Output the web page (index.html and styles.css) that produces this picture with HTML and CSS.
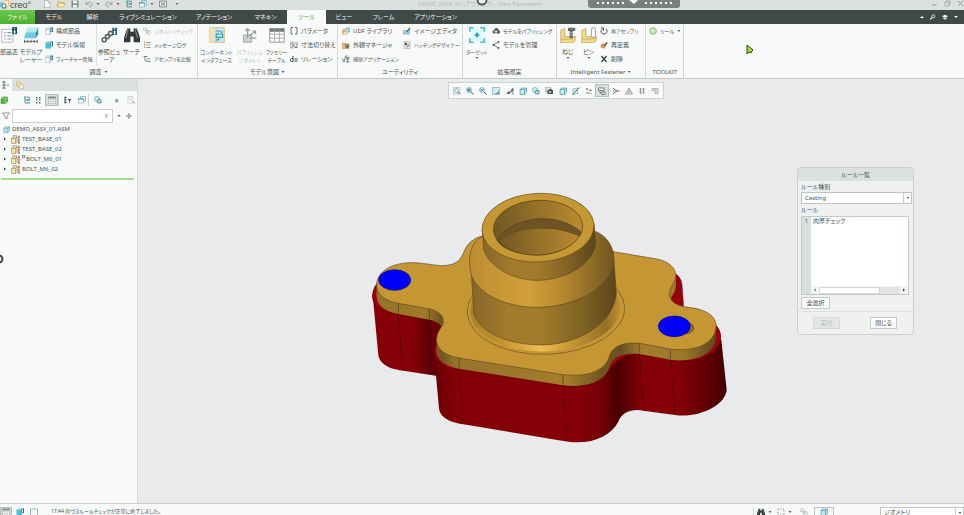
FILE: index.html
```html
<!DOCTYPE html>
<html lang="ja">
<head>
<meta charset="utf-8">
<title>DEMO_ASSY_01 - Creo Parametric</title>
<link rel="stylesheet" href="styles.css">
</head>
<body>
<svg class="defs" aria-hidden="true">
  <symbol id="page" viewBox="0 0 16 16"><path d="M3 1h7l4 4v10H3z" fill="#fff" stroke="#89918f"/><path d="M10 1v4h4" fill="none" stroke="#89918f"/></symbol>
  <symbol id="folder" viewBox="0 0 16 16"><path d="M1 14V3h5l2 2h6v3" fill="#f6dfa0" stroke="#b59039"/><path d="M1 14 4 7h12l-3 7z" fill="#fff0bd" stroke="#b59039"/></symbol>
  <symbol id="layers" viewBox="0 0 16 16"><path d="M1 2h6l2 2v5H1z" fill="#fbeab8" stroke="#c2a052"/><path d="M4 5h6l2 2v5H4z" fill="#fdf1cc" stroke="#c2a052"/><path d="M7 8h5l3 2v5H7z" fill="#fff6dc" stroke="#c2a052"/></symbol>
  <symbol id="save" viewBox="0 0 16 16"><path d="M1 1h14v14H1z" fill="#818987"/><path d="M4 1h8v6H4zM4 10h8v5H4z" fill="#edf1ef"/></symbol>
  <symbol id="undo" viewBox="0 0 16 16"><path d="M2 3v6h6M3 8c4-6 12-4 11 2-1 3-3 4-6 4" fill="none" stroke="#9ba19f" stroke-width="2"/></symbol>
  <symbol id="redo" viewBox="0 0 16 16"><path d="M14 3v6H8M13 8C9 2 1 4 2 10c1 3 3 4 6 4" fill="none" stroke="#9ba19f" stroke-width="2"/></symbol>
  <symbol id="down" viewBox="0 0 8 8"><path d="M1 2h6L4 6z" fill="#59615f"/></symbol>
  <symbol id="treeico" viewBox="0 0 16 16"><path d="M2 1h5v4H2zM8 6h6v4H8zM8 12h6v3H8z" fill="#54aebe"/><path d="M4 5v9h4M4 8h4" fill="none" stroke="#526b72" stroke-width="1.5"/><path d="m8 1 6 4" stroke="#437b8b" stroke-width="2"/></symbol>
  <symbol id="windows" viewBox="0 0 16 16"><path d="M5 1h10v9H5z" fill="#d9f1f6" stroke="#458c9e"/><path d="M1 5h10v9H1z" fill="#f8ffff" stroke="#458c9e"/><path d="M1 6h10" stroke="#318ea5" stroke-width="2"/></symbol>
  <symbol id="closewin" viewBox="0 0 16 16"><path d="M1 2h14v12H1zM4 5l8 6M12 5l-8 6" fill="none" stroke="#737977" stroke-width="1.5"/></symbol>
  <symbol id="bom" viewBox="0 0 20 20"><path d="M1 3h14v16H1z" fill="#fff" stroke="#a5abaa"/><path d="M4 7h2M8 7h5M4 11h2M8 11h5M4 15h2M8 15h5" stroke="#8b9ea3" stroke-width="1.5"/><rect x="14" width="6" height="9" fill="#164f64"/><path d="M17 4v4M17 1v1" stroke="#fff" stroke-width="2"/></symbol>
  <symbol id="player" viewBox="0 0 20 20"><path d="m5 3 2-2h12l-3 13H1z" fill="#70c7df"/><path d="m5 3 2-2h12l-3 6H3z" fill="#bcebf4"/><path d="m16 7 3-6v8l-3 5" fill="#3293ae"/><path d="M1 18h17M2 16v4M6 16v4M10 16v4M14 16v4M18 16v4" stroke="#4b5250"/></symbol>
  <symbol id="info" viewBox="0 0 16 16"><path d="M1 5h9v10H1z" fill="#fff" stroke="#9aa6a4"/><path d="m1 5 3-3h9v9l-3 4V5z" fill="#eaf7f9" stroke="#94a7ab"/><path d="M11 1h5v9h-5z" fill="#236b81"/><path d="M13.500 4v5M13.500 2v1" stroke="#fff" stroke-width="1.500"/></symbol>
  <symbol id="modelinfo" viewBox="0 0 16 16"><path d="M1 5h9v10H1z" fill="#45c2dd"/><path d="m1 5 3-3h9v9l-3 4V5z" fill="#9de2ee" stroke="#3797ac"/><path d="M11 1h5v9h-5z" fill="#236b81"/><path d="M13 3v6" stroke="#fff" stroke-width="2"/></symbol>
  <symbol id="ref" viewBox="0 0 20 20"><path d="m3 16 10-8" stroke="#7b8583" stroke-width="2"/><g fill="#fff" stroke="#596361" stroke-width="2"><circle cx="4" cy="16" r="2.500"/><circle cx="8" cy="12" r="2.500"/><circle cx="12" cy="8" r="2.500"/></g><path d="M14 1h6v9h-6z" fill="#24647a"/><path d="M17 5v4M17 2v1" stroke="#fff" stroke-width="2"/></symbol>
  <symbol id="bino" viewBox="0 0 20 20"><path d="M4 2h4v4h4V2h4l4 11v6h-8v-7H8v7H0v-6z" fill="#333b3a"/><path d="M5 3 2 14M14 3l3 11" stroke="#7c8683" stroke-width="1.500"/></symbol>
  <symbol id="geom" viewBox="0 0 16 16"><g fill="none" stroke="#b6bbb9" stroke-width="1.500"><path d="M1 2h6v5H1zM6 6h5v5H6z"/><circle cx="11" cy="11" r="4"/></g></symbol>
  <symbol id="msg" viewBox="0 0 16 16"><path d="M2 3h2M2 8h2M2 13h2" stroke="#d48748" stroke-width="3"/><path d="M6 3h9M6 8h9M6 13h9" stroke="#929b99" stroke-width="2"/></symbol>
  <symbol id="compare" viewBox="0 0 16 16"><path d="M1 3h8M4 3v9h5M8 8h7M9 13h6" fill="none" stroke="#5a6462" stroke-width="1.500"/></symbol>
  <symbol id="component" viewBox="0 0 20 20"><rect x="1" y="1" width="18" height="18" fill="#c9eaf1" stroke="#daa968" stroke-width="1"/><rect x="1" y="1" width="5" height="18" fill="#fae1a8"/><path d="M8 5h4v4H9v4h8V9h-3M12 6h5M12 13v3H8" fill="none" stroke="#4698aa" stroke-width="1.500"/><circle cx="13" cy="7" r="2" fill="#fff" stroke="#4698aa"/></symbol>
  <symbol id="publish" viewBox="0 0 20 20"><path d="M2 10h10v9H2z" fill="#ccd0ce" stroke="#949b99"/><path d="M7 14V2M4 5l3-3 3 3M9 11l8-6M13 5h4v4M10 14h8" fill="none" stroke="#969d9b" stroke-width="1.500"/></symbol>
  <symbol id="table" viewBox="0 0 20 20"><path d="M1 2h18v17H1z" fill="#fff" stroke="#7c8080"/><path d="M1 4h18" stroke="#777b7b" stroke-width="4"/><path d="M7 2v17M13 2v17M1 9h18M1 14h18" stroke="#9b9f9f"/></symbol>
  <symbol id="brackets" viewBox="0 0 16 16"><path d="M6 1H2v13h4M10 1h4v13h-4" fill="none" stroke="#505b5b" stroke-width="1.700"/></symbol>
  <symbol id="switch" viewBox="0 0 16 16"><path d="M1 2h9v12H1z" fill="#dadddc" stroke="#8c9390"/><path d="m3 4 5 5M14 2v11M10 13h5M3 12l5-3" stroke="#525b59" stroke-width="1.500"/></symbol>
  <symbol id="relation" viewBox="0 0 16 16"><path d="M6 2v11M6 7H3C0 8 0 13 3 13h3" fill="none" stroke="#3e4745" stroke-width="2"/><path d="M9 8h6M9 12h6" stroke="#3e4745" stroke-width="2"/></symbol>
  <symbol id="udf" viewBox="0 0 16 16"><path d="M1 6h10v8H1z" fill="#efb95d" stroke="#af7935"/><path d="m5 7 3-5h7v8h-4" fill="#a7d8e6" stroke="#4b8ca2"/><path d="M3 14h8v-4H3" fill="#fae2a2"/></symbol>
  <symbol id="appearance" viewBox="0 0 16 16"><path d="M1 4h5l2 2h6v9H1z" fill="#f2ba69" stroke="#a77a41"/><circle cx="10" cy="10" r="4" fill="#586865"/><circle cx="9" cy="9" r="1" fill="#fff"/></symbol>
  <symbol id="settings" viewBox="0 0 16 16"><circle cx="6" cy="6" r="5" fill="#d8f0f4" stroke="#5ba3b3" stroke-width="1.500"/><path d="M7 7h7v7H7z" fill="#a8d8e2" stroke="#4a8e9e" stroke-width="1.500"/></symbol>
  <symbol id="aux" viewBox="0 0 16 16"><path d="m1 7 3 7 3-12h4" fill="none" stroke="#505b59" stroke-width="1.500"/><path d="M8 5h7M11 5v9M8 14h7M8 8h7" stroke="#74807d" stroke-width="2"/></symbol>
  <symbol id="edit" viewBox="0 0 16 16"><path d="M1 7h12v7H1z" fill="#a5dceb" stroke="#5c8992"/><path d="m6 10 7-9 2 2-7 8z" fill="#405f67"/></symbol>
  <symbol id="hatch" viewBox="0 0 16 16"><path d="M2 1h12v14H2z" fill="#eee" stroke="#8c9491"/><path d="M4 4h3v3H4zM6 11l6-6M8 13l5-5" stroke="#4b5351" stroke-width="1.500"/></symbol>
  <symbol id="target" viewBox="0 0 20 20"><path d="M3 3h14v14H3z" fill="#dbfbfb"/><path d="M1 6V1h5M14 1h5v5M19 14v5h-5M6 19H1v-5" fill="none" stroke="#36cbd1" stroke-width="2"/><path d="M10 7v6M7 10h6" stroke="#159ba7" stroke-width="2"/></symbol>
  <symbol id="cloud" viewBox="0 0 16 16"><path d="M3 13c-4-3-1-7 2-7 0-6 8-5 8 0 4 1 4 6 1 7z" fill="#4e5654"/><path d="M8 15V8M5 10l3-3 3 3" fill="none" stroke="#f8faf9" stroke-width="2"/></symbol>
  <symbol id="share" viewBox="0 0 16 16"><path d="M13 2 3 8l10 6" fill="none" stroke="#505856" stroke-width="1.500"/><g fill="#505856"><circle cx="13" cy="2" r="2"/><circle cx="3" cy="8" r="2"/><circle cx="13" cy="14" r="2"/></g></symbol>
  <symbol id="screw" viewBox="0 0 20 20"><path d="m1 4 5-2v10h13v5l-3 3H1z" fill="#f2d985" stroke="#c7a45d"/><path d="M1 15h15l3-3" fill="none" stroke="#c9a968"/><path d="M10 1h9v4h-3v9h-4V5h-2z" fill="#666e70"/><path d="M12 7h4M12 10h4" stroke="#bfc4c4"/></symbol>
  <symbol id="pin" viewBox="0 0 20 20"><path d="m1 4 5-2v10h13v5l-3 3H1z" fill="#f2d985" stroke="#c7a45d"/><path d="M1 15h15l3-3" fill="none" stroke="#c9a968"/><rect x="13" y="1" width="5" height="12" rx="2" fill="#fff" stroke="#82898a"/></symbol>
  <symbol id="reload" viewBox="0 0 16 16"><path d="M5 4C0 7 2 14 8 14c6 0 8-6 4-10M2 2h5v5" fill="none" stroke="#444c4a" stroke-width="2"/></symbol>
  <symbol id="redefine" viewBox="0 0 16 16"><circle cx="6" cy="10" r="5" fill="#d19d54"/><path d="m7 9 7-8 1 4-5 6z" fill="#715d45"/></symbol>
  <symbol id="cross" viewBox="0 0 16 16"><path d="m3 2 10 12M13 2 3 14" stroke="#353e3c" stroke-width="2.500"/></symbol>
  <symbol id="globe" viewBox="0 0 16 16"><circle cx="8" cy="8" r="7" fill="#b7dca0" stroke="#7cb067"/><path d="M4 8h8M8 4v8" stroke="#e8f5e0" stroke-width="2"/></symbol>
  <symbol id="cube" viewBox="0 0 16 16"><path d="m2 5 4-3h9v9l-4 4H2z" fill="#bee9f1" stroke="#36798b"/><path d="M2 5h9v10M11 5l4-3" fill="none" stroke="#36798b"/></symbol>
  <symbol id="greencube" viewBox="0 0 16 16"><path d="m2 5 4-3h9v9l-4 4H2z" fill="#4fbb35" stroke="#367f26"/><path d="M2 5h9v10M11 5l4-3" fill="none" stroke="#b4e8a6"/></symbol>
  <symbol id="part" viewBox="0 0 18 18"><path d="m1 7 3-3h8v9l-3 4H1z" fill="#f6e5ab" stroke="#817957"/><path d="M1 7h8v10M9 7l3-3M4 4V1h7v3" fill="none" stroke="#817957"/><path d="M14 2h3v4h-3zM14 8h3v3h-3zM14 13h3v4h-3z" fill="#d49b92" stroke="#8f6a67"/></symbol>
  <symbol id="zoomfit" viewBox="0 0 16 16"><path d="M1 1h13v13H1z" fill="none" stroke="#88908e"/><circle cx="7" cy="7" r="4" fill="#e1f4f7" stroke="#368293"/><path d="m10 10 4 4" stroke="#46717a" stroke-width="2"/></symbol>
  <symbol id="pagefind" viewBox="0 0 16 16"><path d="M2 1h10v13H2zM4 5h6M4 8h6" fill="#fff" stroke="#a4aaa8"/><path d="m11 11 4 4" stroke="#7d8583" stroke-width="2"/></symbol>
  <symbol id="zoomin" viewBox="0 0 16 16"><circle cx="6" cy="6" r="5" fill="#bee7ee" stroke="#37899d"/><path d="M3 6h6M6 3v6M10 10l5 5" stroke="#376777" stroke-width="2"/></symbol>
  <symbol id="zoomout" viewBox="0 0 16 16"><circle cx="6" cy="6" r="5" fill="#d7f1f5" stroke="#37899d"/><path d="M3 6h6M10 10l5 5" stroke="#376777" stroke-width="2"/></symbol>
  <symbol id="repaint" viewBox="0 0 16 16"><path d="M1 1h14v14H1z" fill="#d5eef2" stroke="#60919c"/><path d="M14 3c0 8-5 10-12 11h12z" fill="#44a4ba"/></symbol>
  <symbol id="browser" viewBox="0 0 16 16"><path d="M1 2h14v13H1z" fill="#f4fbfc" stroke="#74a5b1" stroke-width="1.500"/></symbol>
  <symbol id="brush" viewBox="0 0 16 16"><path d="M15 1v8l-5 1-3 4H1l3-5h5l2-5z" fill="#606866"/><path d="M12 11h4v4h-4z" fill="#a5aba9"/></symbol>
  <symbol id="camera" viewBox="0 0 16 16"><path d="M1 1h11v9H1z" fill="#ddd" stroke="#858b88"/><path d="M5 6h3l1-2h4l1 2h2v8H5z" fill="#4b5450"/><circle cx="10" cy="10" r="2" fill="#dce4e1"/></symbol>
  <symbol id="plane" viewBox="0 0 16 16"><path d="m2 4 9-2v11l-9 2z" fill="#dcf1f5" stroke="#528794"/><path d="m1 15 14-14" stroke="#477985" stroke-width="2"/></symbol>
  <symbol id="datum" viewBox="0 0 16 16"><path d="m2 2 4 4M6 2 2 6M8 7h6M10 4v5M5 11l8 3M2 10l4 4" stroke="#8a7556" stroke-width="1.500"/></symbol>
  <symbol id="annot" viewBox="0 0 16 16"><path d="M1 2h11v5H1zM8 10h6v5H8zM4 7v5h4" fill="#fff" stroke="#525c59" stroke-width="1.500"/></symbol>
  <symbol id="spin" viewBox="0 0 16 16"><path d="m2 2 7 6-7 6" fill="none" stroke="#59605e" stroke-width="2"/><path d="M8 8h7" stroke="#b63e44" stroke-width="2"/><circle cx="3" cy="8" r="1.500" fill="#4aa4b4"/></symbol>
  <symbol id="triangle" viewBox="0 0 16 16"><path d="m8 2 7 12H1z" fill="#e6e9e8" stroke="#9ba19e" stroke-width="2"/><path d="M8 6v6" stroke="#999" stroke-width="2"/></symbol>
  <symbol id="pause" viewBox="0 0 16 16"><path d="M5 2v12M11 2v12" stroke="#939996" stroke-width="3"/></symbol>
  <symbol id="play" viewBox="0 0 16 16"><path d="M2 3h12v10H8V7H2z" fill="#d4d8d6" stroke="#b2b7b5" stroke-width="2"/></symbol>
  <symbol id="list" viewBox="0 0 16 16"><path d="M2 2h3v3H2zM8 2h3v3H8zM2 7h3v2H2zM8 7h3v2H8zM2 12h3v3H2zM8 12h3v3H8z" fill="#4e6263"/></symbol>
  <symbol id="filtertree" viewBox="0 0 16 16"><path d="M2 1v14M2 3h3M2 8h3M2 13h3" stroke="#32464b" stroke-width="2"/><path d="M7 6h8l-3 4v4l-2-1v-3z" fill="#526466"/></symbol>
  <symbol id="modeltree" viewBox="0 0 16 16"><path d="M2 1h4v3H2zM2 7h4v3H2zM2 13h4v3H2zM9 8h5" fill="none" stroke="#5b6765" stroke-width="1.500"/></symbol>
  <symbol id="filter" viewBox="0 0 16 16"><path d="M1 2h14l-5 6v6l-4-3V8z" fill="#fff" stroke="#707a77" stroke-width="1.500"/></symbol>
  <symbol id="plus" viewBox="0 0 16 16"><path d="M8 2v12M2 8h12" stroke="#9ca29f" stroke-width="3"/></symbol>
  <symbol id="right" viewBox="0 0 8 8"><path d="m2 1 4 3-4 3z" fill="#353e3c"/></symbol>
  <symbol id="left" viewBox="0 0 8 8"><path d="M6 1 2 4l4 3z" fill="#7c8280"/></symbol>
  <symbol id="up" viewBox="0 0 8 8"><path d="M0 6 4 2l4 4z" fill="#fff"/></symbol>
  <symbol id="search" viewBox="0 0 16 16"><circle cx="9" cy="6" r="4" fill="none" stroke="#fff" stroke-width="2"/><path d="m6 9-5 5" stroke="#fff" stroke-width="3"/></symbol>
  <symbol id="hat" viewBox="0 0 16 16"><path d="m0 6 8-4 8 4-8 4zM3 9l5 3 5-3v3l-5 3-5-3z" fill="#fff"/></symbol>
</svg>

<header class="titlebar">
  <svg class="logo" viewBox="0 0 16 16"><path d="M0 4h6v9H0z" fill="#80c7db"/><path d="M5 5 9 1h6v8l-4 5H5z" fill="#fff2ce" stroke="#d79b3d"/><path d="M4 7h6v7H4z" fill="#fff" stroke="#4694aa" stroke-width="2"/></svg>
  <span class="brand">creo°</span>
  <nav class="quick" aria-label="クイックアクセス">
    <button aria-label="新規"><svg><use href="#page"/></svg></button><button aria-label="開く"><svg><use href="#folder"/></svg></button><button aria-label="保存"><svg><use href="#save"/></svg></button><button class="wide" aria-label="元に戻す"><svg><use href="#undo"/></svg><svg class="tiny"><use href="#down"/></svg></button><button class="wide" aria-label="やり直し"><svg><use href="#redo"/></svg><svg class="tiny"><use href="#down"/></svg></button><button aria-label="再生成"><svg><use href="#treeico"/></svg></button><button class="wide" aria-label="ウィンドウ"><svg><use href="#windows"/></svg><svg class="tiny"><use href="#down"/></svg></button><button aria-label="閉じる"><svg><use href="#closewin"/></svg></button><button aria-label="カスタマイズ"><svg class="tiny"><use href="#down"/></svg></button>
  </nav>
  <span class="doc">DEMO_ASSY_01 (アクティブ) - Creo Parametric</span>
  <div class="winctl"><button aria-label="最小化"><svg viewBox="0 0 16 16"><path d="M3 11h10" stroke="#a4aaa8" stroke-width="3"/></svg></button><button aria-label="元のサイズ"><svg viewBox="0 0 16 16"><path d="M5 5V2h9v9h-3M2 5h9v9H2z" fill="none" stroke="#a4aaa8" stroke-width="2"/></svg></button><button aria-label="終了"><svg viewBox="0 0 16 16"><path d="m2 2 12 12M14 2 2 14" stroke="#8c9290" stroke-width="2"/></svg></button></div>
  <svg class="ring" viewBox="0 0 12 6"><circle cx="6" cy="0" r="4.500" fill="#eef0ef" stroke="#525957" stroke-width="2"/></svg>
  <svg class="grip" viewBox="0 0 92 9"><path d="M0 0h92v5q0 3-3 3H3Q0 8 0 5z" fill="#7b807f"/><path d="M9 3h28M57 3h28" stroke="#fff" stroke-width="2" stroke-dasharray="2 3"/><path d="M41 0h9l-4 4z" fill="#fff"/></svg>
</header>

<nav class="tabs" aria-label="リボン">
  <a class="file" href="#">ファイル</a><a href="#">モデル</a><a href="#">解析</a><a href="#">ライブシミュレーション</a><a href="#">アノテーション</a><a href="#">マネキン</a><a class="active" href="#">ツール</a><a href="#">ビュー</a><a href="#">フレーム</a><a href="#">アプリケーション</a>
  <div class="help"><svg class="tiny"><use href="#up"/></svg><svg><use href="#search"/></svg><svg><use href="#hat"/></svg><svg class="tiny" viewBox="0 0 8 8"><path d="M0 2h8L4 6z" fill="#fff"/></svg></div>
</nav>

<section class="ribbon">
  <div class="group survey">
    <div class="tools">
      <button class="big"><svg><use href="#bom"/></svg><span>部品表</span></button>
      <button class="big"><svg><use href="#player"/></svg><span>モデルプ<br>レーヤー</span></button>
      <div class="stack"><button><svg><use href="#info"/></svg>構成部品</button><button><svg><use href="#modelinfo"/></svg>モデル情報</button><button class="kana"><svg><use href="#info"/></svg>フィーチャー情報</button></div>
      <button class="big divided"><svg><use href="#ref"/></svg><span>参照ビュ<br>ーア</span></button>
      <button class="big"><svg><use href="#bino"/></svg><span>サーチ</span></button>
      <div class="stack"><button class="kana" disabled><svg><use href="#geom"/></svg>ジオメトリチェック</button><button class="kana"><svg><use href="#msg"/></svg>メッセージログ</button><button class="kana"><svg><use href="#compare"/></svg>アセンブリを比較</button></div>
    </div><div class="caption">調査<svg class="tiny"><use href="#down"/></svg></div>
  </div>
  <div class="group intent">
    <div class="tools">
      <button class="big kana"><svg><use href="#component"/></svg><span>コンポーネント<br>インタフェース</span></button>
      <button class="big kana" disabled><svg><use href="#publish"/></svg><span>パブリッシュ<br>ジオメトリ</span></button>
      <button class="big kana"><svg><use href="#table"/></svg><span>ファミリー<br>テーブル</span></button>
      <div class="stack"><button><svg><use href="#brackets"/></svg>パラメータ</button><button><svg><use href="#switch"/></svg>寸法切り替え</button><button><svg><use href="#relation"/></svg>リレーション</button></div>
    </div><div class="caption">モデル意図<svg class="tiny"><use href="#down"/></svg></div>
  </div>
  <div class="group utility">
    <div class="tools">
      <div class="stack"><button><svg><use href="#udf"/></svg>UDF ライブラリ</button><button><svg><use href="#appearance"/></svg>外観マネージャ</button><button class="kana"><svg><use href="#aux"/></svg>補助アプリケーション</button></div>
      <div class="stack"><button><svg><use href="#edit"/></svg>イメージエディタ</button><button class="kana"><svg><use href="#hatch"/></svg>ハッチングデザイナー</button></div>
    </div><div class="caption">ユーティリティ</div>
  </div>
  <div class="group reality">
    <div class="tools">
      <button class="big kana"><svg><use href="#target"/></svg><span>ターゲット</span><svg class="tiny"><use href="#down"/></svg></button>
      <div class="stack"><button class="kana"><svg><use href="#cloud"/></svg>モデルをパブリッシング</button><button><svg><use href="#share"/></svg>モデルを管理</button></div>
    </div><div class="caption">拡張現実</div>
  </div>
  <div class="group fastener">
    <div class="tools">
      <button class="big"><svg><use href="#screw"/></svg><span>ねじ</span><svg class="tiny"><use href="#down"/></svg></button>
      <button class="big"><svg><use href="#pin"/></svg><span>ピン</span><svg class="tiny"><use href="#down"/></svg></button>
      <div class="stack"><button class="kana"><svg><use href="#reload"/></svg>再アセンブリ</button><button><svg><use href="#redefine"/></svg>再定義</button><button><svg><use href="#cross"/></svg>削除</button></div>
    </div><div class="caption">Intelligent Fastener<svg class="tiny"><use href="#down"/></svg></div>
  </div>
  <div class="group toolkit">
    <div class="tools"><div class="stack"><button class="kana"><svg><use href="#globe"/></svg>ツール<svg class="tiny"><use href="#down"/></svg></button></div></div>
    <div class="caption">TOOLKIT</div>
  </div>
</section>

<div class="workspace">
  <aside class="sidebar">
    <div class="sidetabs"><button class="on" aria-label="モデルツリー"><svg><use href="#modeltree"/></svg></button><button aria-label="フォルダ"><svg><use href="#layers"/></svg></button></div>
    <div class="treebar">
      <button aria-label="モデル"><svg><use href="#greencube"/></svg></button>
      <button aria-label="ツリー"><svg><use href="#treeico"/></svg></button><button aria-label="リスト"><svg><use href="#list"/></svg></button><button class="pressed" aria-label="列"><svg><use href="#table"/></svg></button><button class="divided" aria-label="フィルタ"><svg><use href="#filtertree"/></svg></button><button aria-label="表示"><svg><use href="#windows"/></svg></button><button class="divided" aria-label="設定"><svg><use href="#settings"/></svg></button><button aria-label="その他">»</button><button aria-label="検索"><svg><use href="#pagefind"/></svg></button>
    </div>
    <div class="find"><svg><use href="#filter"/></svg><label><input type="text" aria-label="ツリー検索"><span>×</span></label><svg class="tiny"><use href="#down"/></svg><svg><use href="#plus"/></svg></div>
    <ul class="tree">
      <li class="root"><svg><use href="#cube"/></svg>DEMO_ASSY_01.ASM</li>
      <li><svg class="tiny"><use href="#right"/></svg><svg><use href="#part"/></svg>TEST_BASE_01</li>
      <li><svg class="tiny"><use href="#right"/></svg><svg><use href="#part"/></svg>TEST_BASE_02</li>
      <li><svg class="tiny"><use href="#right"/></svg><svg><use href="#part"/></svg><span><i class="mark"></i>BOLT_M6_01</span></li>
      <li><svg class="tiny"><use href="#right"/></svg><svg><use href="#part"/></svg>BOLT_M6_02</li>
    </ul>
    <div class="insert"></div>
  </aside>

  <main class="canvas">
    <div class="viewbar">
      <button aria-label="全体表示"><svg><use href="#zoomfit"/></svg></button><button aria-label="拡大"><svg><use href="#zoomin"/></svg></button><button aria-label="縮小"><svg><use href="#zoomout"/></svg></button><button aria-label="再表示"><svg><use href="#repaint"/></svg></button><button aria-label="レンダリング"><svg><use href="#brush"/></svg></button><button aria-label="表示スタイル"><svg><use href="#cube"/></svg></button><button aria-label="保存ビュー"><svg><use href="#settings"/></svg></button><button aria-label="ビューマネージャ"><svg><use href="#camera"/></svg></button><button aria-label="透視"><svg><use href="#cube"/></svg></button><button aria-label="断面"><svg><use href="#plane"/></svg></button><button aria-label="データム"><svg><use href="#datum"/></svg></button><button class="pressed" aria-label="注記"><svg><use href="#annot"/></svg></button><button aria-label="スピンセンター"><svg><use href="#spin"/></svg></button><button aria-label="解析"><svg><use href="#triangle"/></svg></button><button aria-label="一時停止"><svg><use href="#pause"/></svg></button><button aria-label="再生"><svg><use href="#play"/></svg></button>
    </div>

    <svg class="model" viewBox="0 0 1140 810" role="img" aria-label="アセンブリモデル">
      <defs>
        <linearGradient id="red" gradientUnits="userSpaceOnUse" x1="40" y1="0" x2="1100" y2="0"><stop offset="0" stop-color="#850007"/><stop offset=".11" stop-color="#850007"/><stop offset=".16" stop-color="#5d0005"/><stop offset=".19" stop-color="#710006"/><stop offset=".23" stop-color="#840007"/><stop offset=".58" stop-color="#840006"/><stop offset=".64" stop-color="#760005"/><stop offset=".69" stop-color="#4b0003"/><stop offset=".72" stop-color="#600004"/><stop offset=".76" stop-color="#830006"/><stop offset=".86" stop-color="#840006"/><stop offset=".94" stop-color="#640004"/><stop offset="1" stop-color="#400002"/></linearGradient>
        <linearGradient id="side" gradientUnits="userSpaceOnUse" x1="50" y1="0" x2="1070" y2="0"><stop offset="0" stop-color="#92712a"/><stop offset=".14" stop-color="#a17b2b"/><stop offset=".19" stop-color="#6f5520"/><stop offset=".23" stop-color="#94732b"/><stop offset=".56" stop-color="#a47d2c"/><stop offset=".66" stop-color="#705620"/><stop offset=".72" stop-color="#695020"/><stop offset=".78" stop-color="#a47d2d"/><stop offset=".9" stop-color="#9c782c"/><stop offset="1" stop-color="#5c461a"/></linearGradient>
        <linearGradient id="wall" x1="0" x2="1"><stop offset="0" stop-color="#85672a"/><stop offset=".25" stop-color="#a27b2d"/><stop offset=".5" stop-color="#a17a2c"/><stop offset=".78" stop-color="#7d6023"/><stop offset="1" stop-color="#5b451a"/></linearGradient>
        <linearGradient id="cone" x1="0" x2="1"><stop offset="0" stop-color="#bb8c32"/><stop offset=".4" stop-color="#d2a03a"/><stop offset=".65" stop-color="#b58830"/><stop offset="1" stop-color="#715520"/></linearGradient>
        <linearGradient id="bore" x1="0" x2="1"><stop offset="0" stop-color="#705724"/><stop offset=".5" stop-color="#957129"/><stop offset="1" stop-color="#b98a31"/></linearGradient>
        <linearGradient id="fillet" x1="0" x2="1"><stop offset="0" stop-color="#a87f2d"/><stop offset=".22" stop-color="#c8952f"/><stop offset=".46" stop-color="#f0bf56"/><stop offset=".66" stop-color="#c59635"/><stop offset=".9" stop-color="#957027"/><stop offset="1" stop-color="#bd8e31"/></linearGradient>
        <path id="plate" d="M50 315C50 275 95 247 160 248C200 250 225 257 250 257C290 255 302 240 312 215C322 190 340 175 367 168L700 150L760 215L890 237C925 243 950 265 947 290C945 310 930 320 928 340C928 365 950 378 985 382C1040 388 1070 410 1068 440C1065 490 1010 515 935 508L838 490C790 485 755 500 748 530C735 570 690 592 609 584L297 534C250 525 228 505 230 475C232 450 250 440 250 425C250 405 235 393 208 387L115 370C75 362 50 345 50 315Z"/>
      </defs>
      <path d="M38 345 55 525C60 558 100 569 130 572L228 587 237 685C240 715 275 728 305 732L610 783C690 798 750 770 775 725C785 695 820 685 850 692L945 705C1010 715 1095 680 1100 630L1084 480 1020 420 960 400 600 350 220 350z" fill="url(#red)"/>
      <path d="M948 282Q967 294 967 325L971 380H940L925 340z" fill="#980009" stroke="#580005"/>
      <path d="M38 350C38 295 100 270 160 290L900 380 1060 430C1095 455 1085 505 1045 525C1010 545 970 546 920 538L835 523C790 520 765 545 748 570C715 610 665 625 610 618L297 570C250 565 220 540 222 508L250 450C245 430 220 422 200 418L115 404C72 395 38 380 38 350z" fill="#9f000b" stroke="#690006" stroke-width="3"/>
      <g fill="url(#side)"><use href="#plate" y="32"/><use href="#plate" y="24"/><use href="#plate" y="16"/><use href="#plate" y="8"/></g>
      <use href="#plate" fill="#c59734" stroke="#61491b" stroke-width="2"/>
      <path d="M115 370v32M208 387v32M297 534v32M609 584v32M838 490v32M931 508v32" stroke="#513e19" stroke-width="2"/>
      <path d="m115 405 12 165M208 421l15 165M297 570l10 162M609 618l13 165M755 565l18 160M838 524l14 168M931 541l15 164" stroke="#4d0004" stroke-width="2"/>
      <ellipse cx="558" cy="390" rx="236" ry="133" transform="rotate(-2 558 390)" fill="#c59734" stroke="#6b511d" stroke-width="2"/>
      <ellipse cx="556" cy="388" rx="225" ry="126" transform="rotate(-2 556 388)" fill="url(#fillet)"/>
      <path d="M334 275 341 397C355 455 440 495 550 495C670 490 765 420 769 338L761 235z" fill="url(#wall)" stroke="#604a1c" stroke-width="2"/>
      <path d="M367 170C330 188 322 235 334 285C355 345 440 382 530 382C640 382 745 330 762 250C765 200 740 165 700 152z" fill="url(#cone)" stroke="#604a1c" stroke-width="2"/>
      <path d="M367 148 371 207C385 260 460 301 530 301C620 301 703 250 707 188L702 130z" fill="url(#wall)" stroke="#604a1c" stroke-width="2"/>
      <ellipse cx="534" cy="143" rx="168" ry="103" transform="rotate(-3 534 143)" fill="#c69834" stroke="#604a1c" stroke-width="2"/>
      <ellipse cx="534" cy="143" rx="134" ry="82" transform="rotate(-3 534 143)" fill="url(#bore)"/>
      <path d="M411 181C440 120 580 83 664 157L655 169C585 132 480 138 421 192z" fill="#6e5424" stroke="#4e3e1b" stroke-width="2"/>
      <path d="M416 189C465 137 580 134 657 169C640 203 590 226 537 227C478 225 435 212 416 189z" fill="url(#bore)"/>
      <ellipse cx="534" cy="143" rx="134" ry="82" transform="rotate(-3 534 143)" fill="none" stroke="#4e3d18" stroke-width="2"/>
      <ellipse cx="978" cy="444" rx="23" ry="17" fill="#8b6c2b" stroke="#4c3b19" stroke-width="2"/>
      <g fill="#0000fa" stroke="#000085" stroke-width="2"><ellipse cx="104" cy="300" rx="48" ry="31"/><ellipse cx="943" cy="439" rx="48" ry="31"/></g>
    </svg>

    <form class="dialog" aria-labelledby="dlg-title">
      <h2 id="dlg-title">ルール一覧</h2>
      <div class="dlgbody">
        <label for="kind">ルール種別</label>
        <div class="combo"><select id="kind"><option>Casting</option></select><i><svg class="tiny"><use href="#down"/></svg></i></div>
        <div class="label">ルール</div>
        <div class="listbox"><table aria-label="ルール"><tbody><tr><th scope="row">1</th><td>肉厚チェック</td></tr></tbody></table><div class="scroll"><svg class="tiny"><use href="#left"/></svg><div class="track"><div class="thumb"></div></div><svg class="tiny"><use href="#right"/></svg></div></div>
        <button class="all" type="button">全選択</button>
      </div>
      <div class="actions"><button type="button" disabled>実行</button><button type="button">閉じる</button></div>
    </form>
  </main>
</div>

<footer class="status">
  <div class="statusleft"><button class="pressed" aria-label="ナビゲータ"><svg><use href="#table"/></svg></button><button aria-label="ブラウザ"><svg><use href="#modelinfo"/></svg></button><button aria-label="全画面"><svg><use href="#browser"/></svg></button></div>
  <output>17:44 肉づきルールチェックが正常に終了しました。</output>
  <div class="statusright"><button aria-label="検索"><svg><use href="#bino"/></svg><svg class="tiny"><use href="#down"/></svg></button><button aria-label="選択"><svg viewBox="0 0 16 16"><path d="M2 2h12v12H2z" fill="none" stroke="#7b8280" stroke-width="2" stroke-dasharray="2 3"/></svg><svg class="tiny"><use href="#down"/></svg></button><button aria-label="ジオメトリ"><svg><use href="#geom"/></svg></button><button class="frame" aria-label="部品"><svg><use href="#cube"/></svg></button></div>
  <div class="combo picker"><select aria-label="選択フィルタ"><option>ジオメトリ</option></select><i><svg class="tiny"><use href="#down"/></svg></i></div>
</footer>
<svg class="knob" viewBox="0 0 4 10"><circle cx="-1" cy="5" r="3.500" fill="#eee" stroke="#454b49" stroke-width="2"/></svg>
<svg class="cursor" viewBox="0 0 8 12"><path d="M1 1v9l2-2 2 1 1-2 1-1z" fill="#a7de29" stroke="#344212"/></svg>
</body>
</html>
```
FILE: styles.css
```css
* { box-sizing: border-box; }
body {
  margin: 0;
  height: 100vh;
  display: grid;
  grid-template-rows: 10px 14px 55px 1fr 12px;
  overflow: hidden;
  background: #f8faf9;
  color: #4b5250;
  font: 6px/8px "Noto Sans", "Noto Sans CJK JP", sans-serif;
  font-feature-settings: "palt";
}
.defs { position: absolute; width: 0; height: 0; }
svg { display: block; flex: none; width: 8px; height: 8px; }
svg.tiny { width: 4px; height: 4px; }
button { font: inherit; color: inherit; background: none; border: 0; padding: 0; margin: 0; display: flex; align-items: center; justify-content: center; white-space: nowrap; }
a { color: inherit; text-decoration: none; }

.titlebar { position: relative; display: flex; align-items: flex-start; background: #dce1df; }
.logo { width: 9px; height: 9px; }
.brand { width: 31px; padding-left: 1px; font: 9px/10px "Liberation Sans", sans-serif; color: #424b48; }
.quick { display: flex; }
.quick button { width: 14px; height: 7px; }
.quick .wide { width: 20px; gap: 3px; }
.doc { position: absolute; left: 418px; top: 0; font-size: 6px; color: #b4bab8; white-space: nowrap; }
.winctl { display: flex; gap: 6px; margin-left: auto; }
.winctl svg { width: 7px; height: 7px; }
.ring { position: absolute; left: 476px; top: 0; width: 12px; height: 6px; }
.grip { position: absolute; left: 588px; top: 0; width: 92px; height: 9px; }

.tabs { display: grid; grid-template-columns: 35px 38px 39px 72px 60px 43px 39px 36px 43px 61px 1fr; background: #3f4947; color: #f5f8f7; }
.tabs a { display: flex; align-items: center; justify-content: center; white-space: nowrap; }
.tabs .file { background: linear-gradient(#6cc94b, #4db02e); }
.tabs .active { background: #f8faf9; color: #4ea438; }
.help { display: flex; justify-content: flex-end; align-items: center; gap: 6px; padding-right: 6px; }
.help svg:not(.tiny) { width: 6px; height: 6px; }

.ribbon { display: flex; border-bottom: 1px solid #c5cac8; background: #f8faf9; }
.group { display: grid; grid-template-rows: 42px 12px; border-right: 1px solid #d2d7d5; }
.survey { width: 198px; }
.intent { width: 140px; }
.utility { width: 125px; }
.reality { width: 94px; }
.fastener { width: 89px; }
.toolkit { width: 38px; }
.tools { display: grid; justify-content: start; }
.survey .tools { grid-template-columns: 18px 26px 52px 25px 21px 54px; }
.intent .tools { grid-template-columns: 37px 29px 25px 48px; }
.utility .tools { grid-template-columns: 61px 60px; padding-left: 3px; }
.reality .tools { grid-template-columns: 28px 64px; }
.fastener .tools { grid-template-columns: 21px 21px 44px; }
.toolkit .tools { grid-template-columns: 36px; padding-left: 2px; }
.big { flex-direction: column; justify-content: flex-start; padding-top: 3px; }
.big svg:not(.tiny) { width: 16px; height: 16px; margin-bottom: 5px; }
.big.divided { border-left: 1px solid #dde1df; }
.stack { display: flex; flex-direction: column; padding-left: 1px; }
.stack button { height: 14px; justify-content: flex-start; gap: 3px; }
.kana { font-size: 5px; }
button:disabled { color: #b7bcba; }
.caption { display: flex; align-items: center; justify-content: center; gap: 2px; white-space: nowrap; }

.workspace { display: grid; grid-template-columns: 138px 1fr; min-height: 0; }
.sidebar { background: #f8faf9; border-right: 1px solid #d5d9d8; }
.sidetabs { display: flex; height: 12px; background: #dae0de; }
.sidetabs button { width: 12px; }
.sidetabs button + button { width: 16px; }
.sidetabs .on { background: #f8faf9; }
.treebar { display: grid; grid-template-columns: 20px 13px 12px 13px 18px 12px 18px 21px 1fr; height: 18px; align-items: center; padding-right: 4px; }
.treebar button { height: 12px; font-size: 8px; }
.treebar button:first-child { justify-content: flex-start; }
.treebar .divided { border-left: 1px solid #ccd2cf; }
.pressed { background: #dadedc; border: 1px solid #b7bdba; }
.find { display: grid; grid-template-columns: 8px 101px 8px 8px; gap: 2px; align-items: center; height: 14px; padding-left: 2px; }
.find label { display: flex; align-items: center; height: 14px; background: #fff; border: 1px solid #c9cecb; }
.find input { flex: 1; min-width: 0; height: 10px; border: 0; padding: 0; background: none; font: inherit; }
.find span { width: 8px; font-size: 8px; color: #9ba19f; }
.find .tiny { justify-self: center; }
.tree { list-style: none; margin: 1px 0 0; padding: 0; }
.tree li { height: 10px; display: flex; align-items: center; gap: 2px; padding-left: 3px; }
.tree li svg:not(.tiny) { width: 9px; height: 9px; }
.tree .root svg:not(.tiny) { width: 7px; height: 7px; }
.tree .tiny { margin-right: 2px; }
.mark { display: inline-block; width: 3px; height: 3px; margin-right: 1px; border: 1px solid #8b918f; vertical-align: top; }
.insert { height: 2px; margin: 4px 3px 0 1px; background: #a3e08d; }

.canvas { position: relative; background: #e8eaeb; overflow: hidden; }
.viewbar { position: absolute; left: 310px; top: 3px; display: flex; padding: 1px; background: #f8faf9; border: 1px solid #ced2d0; }
.viewbar button { width: 13px; height: 13px; }
.viewbar button:nth-child(4n) { width: 14px; }
.model { position: absolute; left: 222px; top: 101px; width: 380px; height: 270px; }
.dialog { position: absolute; right: 50px; top: 88px; width: 117px; background: #eff1f0; border: 1px solid #cbcfcd; border-radius: 4px; overflow: hidden; }
.dialog h2 { margin: 0; height: 13px; font: inherit; line-height: 15px; text-align: center; background: #dce0de; }
.dlgbody { padding: 1px 1px 2px 3px; border-bottom: 1px solid #dce0de; }
.dlgbody label, .label { display: block; line-height: 10px; }
.combo { display: flex; height: 12px; background: #fff; border: 1px solid #bfc4c2; }
.combo select { flex: 1; min-width: 0; appearance: none; border: 0; padding: 0 3px; background: none; color: inherit; font: inherit; }
.combo i { width: 8px; display: flex; align-items: center; justify-content: center; border-left: 1px solid #c9cdcb; }
.label { padding-top: 1px; }
.listbox { display: flex; flex-direction: column; justify-content: space-between; margin: 1px 3px 2px 0; height: 79px; border: 1px solid #c5cac7; background: linear-gradient(to right, #dadedc 9px, #fff 9px); }
.listbox table { border-collapse: collapse; margin-right: auto; }
.listbox th { width: 9px; padding: 0; font-weight: normal; }
.listbox td { padding: 0 2px; }
.scroll { display: flex; align-items: center; height: 8px; margin-left: 9px; gap: 2px; padding: 0 2px; background: #f3f4f4; }
.track { flex: 1; height: 7px; background: #e0e3e2; }
.thumb { width: 75%; height: 7px; background: #fff; border: 1px solid #d5d8d7; }
.dialog button { height: 12px; width: 27px; background: #fbfcfc; border: 1px solid #c5cac8; }
.dialog .all { width: 29px; }
.dialog button:disabled { background: #e3e6e5; border-color: #d5d9d7; }
.actions { display: flex; justify-content: space-between; padding: 5px 16px 5px 15px; }

.status { display: flex; align-items: flex-start; padding-top: 3px; border-top: 1px solid #cbd0ce; background: #f8faf9; overflow: hidden; }
.statusleft { display: flex; width: 51px; gap: 1px; }
.statusleft button { width: 12px; height: 10px; }
.statusleft button + button { width: 13px; }
.status output { white-space: nowrap; line-height: 8px; font-size: 5px; }
.statusright { display: flex; margin-left: auto; border-left: 1px solid #d4d8d6; }
.statusright button { width: 20px; height: 10px; gap: 3px; }
.statusright .frame { border: 1px solid #bdc3c0; }
.picker { width: 84px; height: 10px; border-bottom: 0; margin-left: 46px; flex: none; }
.picker select { height: 8px; }
.knob { position: absolute; left: 0; top: 254px; width: 4px; height: 10px; }
.cursor { position: absolute; left: 746px; top: 44px; width: 8px; height: 12px; }
```
